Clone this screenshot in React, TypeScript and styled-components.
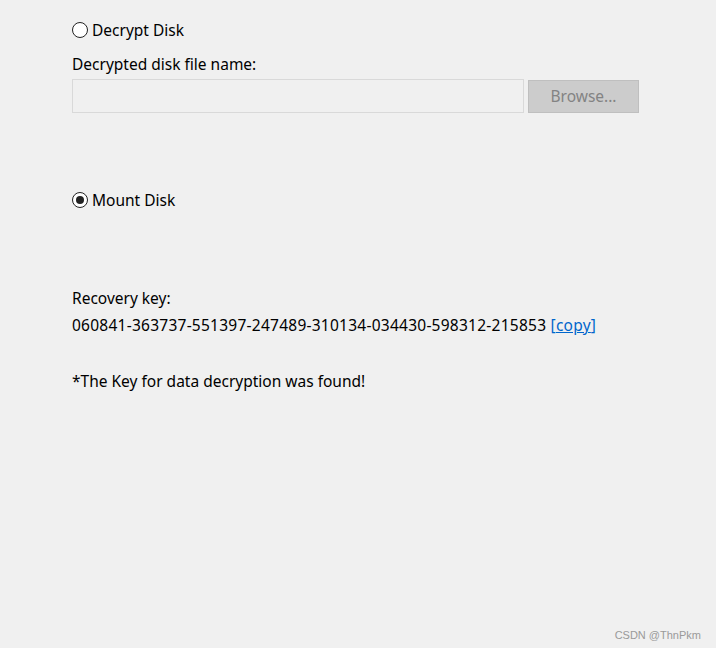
import styled, { createGlobalStyle } from 'styled-components'

const Global = createGlobalStyle`
  html, body {
    margin: 0;
    padding: 0;
    background: #f0f0f0;
  }
  body {
    font-family: "Noto Sans", "Open Sans", sans-serif;
    font-size: 15.5px;
    color: #000;
  }
`

const Page = styled.div`
  position: relative;
  width: 716px;
  height: 648px;
  padding: 20px 0 0 72px;
  box-sizing: border-box;
`

const Section = styled.div<{ $gap: number }>`
  margin-bottom: ${p => p.$gap}px;
`

const RadioRow = styled.label`
  display: flex;
  align-items: center;
  gap: 4px;
  height: 20px;
  line-height: 20px;
`

const RadioDot = styled.span<{ $checked?: boolean }>`
  width: 14px;
  height: 14px;
  border: 1px solid #222;
  border-radius: 50%;
  background: #fff;
  display: flex;
  align-items: center;
  justify-content: center;
  &::after {
    content: '';
    display: ${p => (p.$checked ? 'block' : 'none')};
    width: 8px;
    height: 8px;
    border-radius: 50%;
    background: #222;
  }
`

const Label = styled.div`
  height: 20px;
  line-height: 20px;
  margin-top: 14px;
`

const FileRow = styled.div`
  display: flex;
  align-items: center;
  gap: 4px;
  margin-top: 5px;
`

const TextBox = styled.div`
  width: 452px;
  height: 34px;
  box-sizing: border-box;
  border: 1px solid #d9d9d9;
  background: #f0f0f0;
`

const Button = styled.div`
  width: 111px;
  height: 33px;
  box-sizing: border-box;
  border: 1px solid #bfbfbf;
  background: #cccccc;
  color: #838383;
  display: flex;
  align-items: center;
  justify-content: center;
`

const Line = styled.div<{ $top?: number; $spacing?: number }>`
  height: 20px;
  line-height: 20px;
  margin-top: ${p => p.$top ?? 0}px;
  letter-spacing: ${p => p.$spacing ?? 0}px;
  white-space: nowrap;
`

const CopyLink = styled.a`
  color: #0066cc;
  text-decoration: underline;
`

const Bracket = styled.span`
  color: #0066cc;
`

const Watermark = styled.div`
  position: absolute;
  right: 15px;
  bottom: 7px;
  font-family: "Liberation Sans", Arial, sans-serif;
  font-size: 11px;
  color: #9a9a9a;
`

const App = () => {
  return (
    <>
      <Global />
      <Page>
        <Section $gap={77}>
          <RadioRow>
            <RadioDot />
            Decrypt Disk
          </RadioRow>
          <Label>Decrypted disk file name:</Label>
          <FileRow>
            <TextBox />
            <Button>Browse...</Button>
          </FileRow>
        </Section>
        <Section $gap={78}>
          <RadioRow>
            <RadioDot $checked />
            Mount Disk
          </RadioRow>
        </Section>
        <Line>Recovery key:</Line>
        <Line $top={7} $spacing={0.25}>
          060841-363737-551397-247489-310134-034430-598312-215853{' '}
          <Bracket>[</Bracket>
          <CopyLink href="#">copy</CopyLink>
          <Bracket>]</Bracket>
        </Line>
        <Line $top={36}>*The Key for data decryption was found!</Line>
        <Watermark>CSDN @ThnPkm</Watermark>
      </Page>
    </>
  )
}

export default App
